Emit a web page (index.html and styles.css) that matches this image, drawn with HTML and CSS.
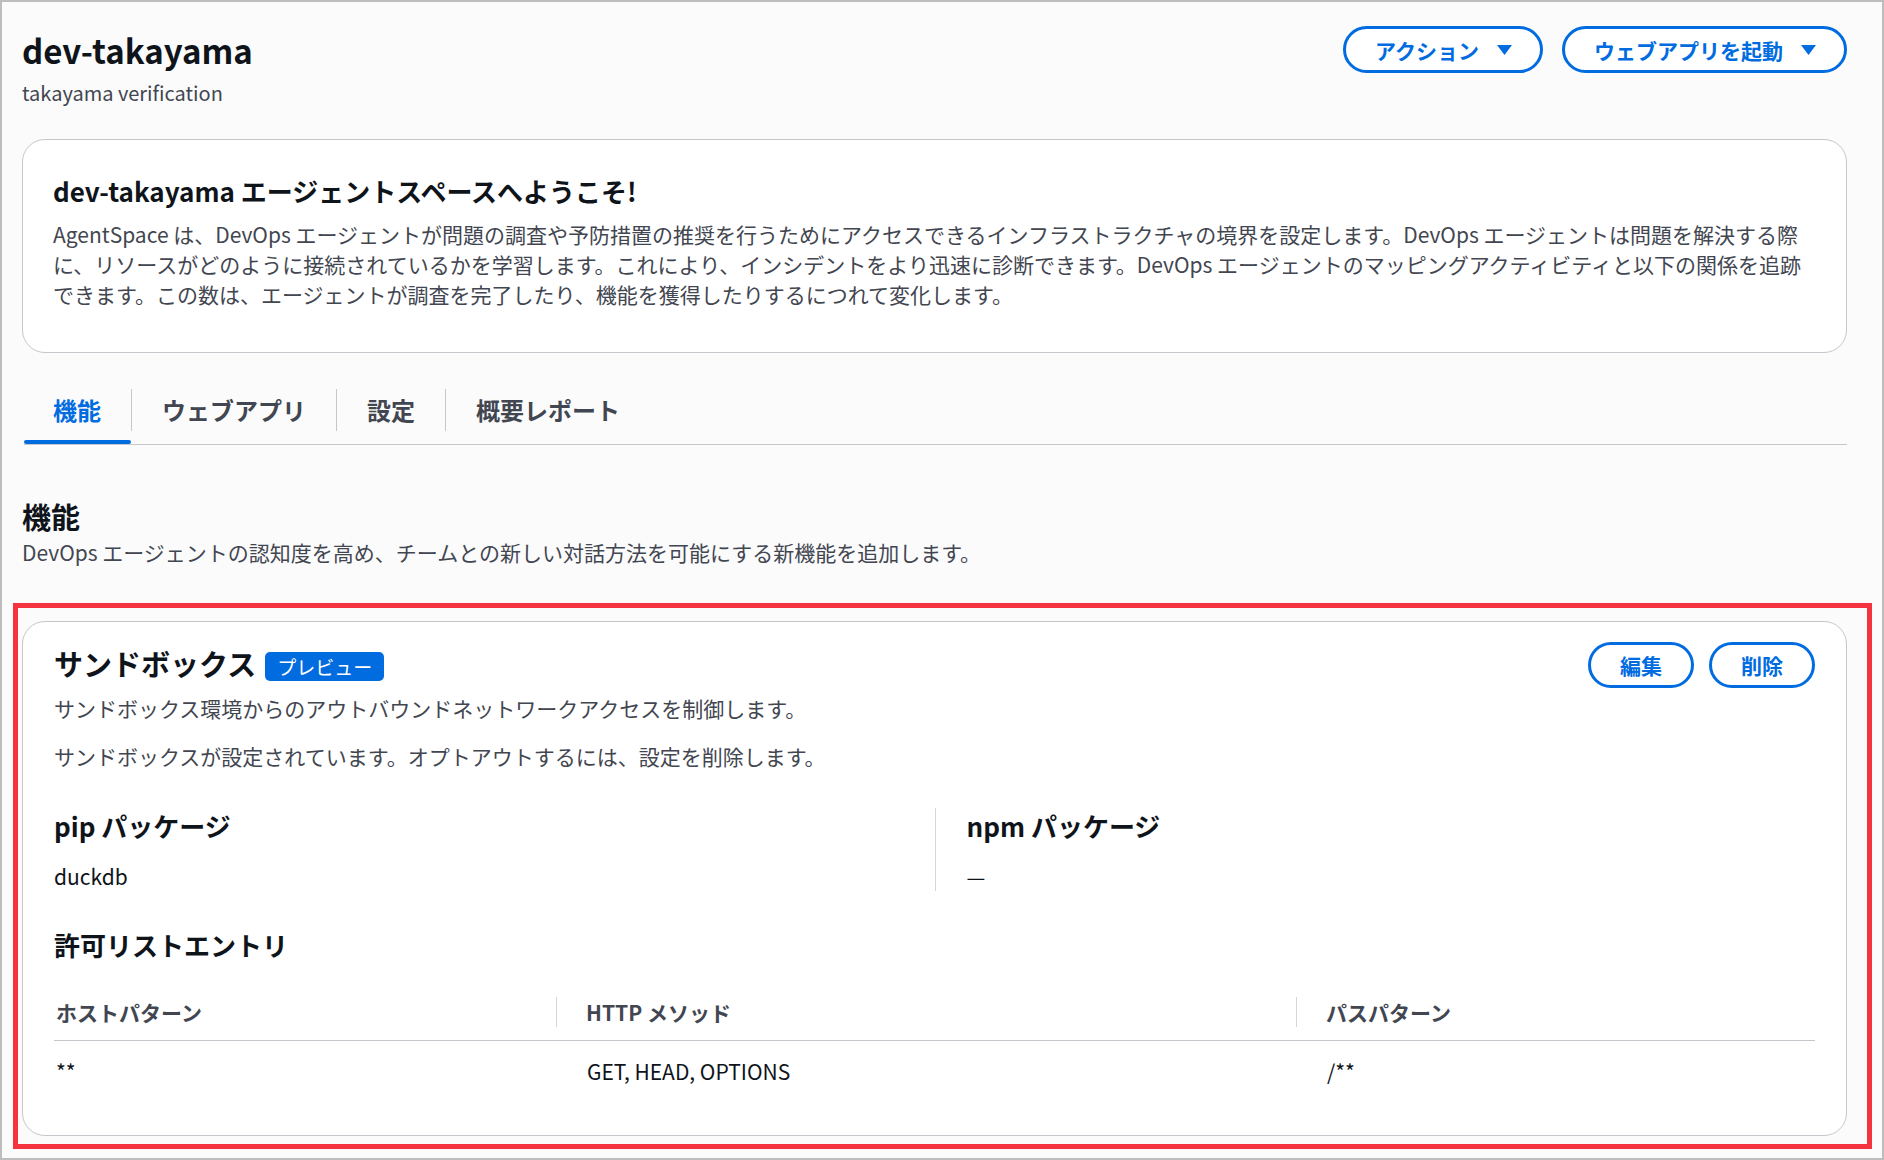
FILE: index.html
```html
<!DOCTYPE html>
<html lang="ja">
<head>
  <meta charset="UTF-8">
  <meta name="viewport" content="width=device-width, initial-scale=1.0">
  <title>dev-takayama</title>
  <link rel="stylesheet" href="styles.css">
</head>
<body>
  <div class="frame">
    <header class="page-header">
      <div>
        <h1 class="page-title">dev-takayama</h1>
        <p class="page-subtitle">takayama verification</p>
      </div>
      <div class="actions">
        <button class="btn">
          アクション
          <svg class="caret" width="15" height="12" viewBox="0 0 15 12"><polygon points="0,1 15,1 7.5,11" /></svg>
        </button>
        <button class="btn">
          ウェブアプリを起動
          <svg class="caret" width="15" height="12" viewBox="0 0 15 12"><polygon points="0,1 15,1 7.5,11" /></svg>
        </button>
      </div>
    </header>

    <section class="card welcome">
      <h2 class="welcome-title">dev-takayama エージェントスペースへようこそ!</h2>
      <p class="welcome-text">
        AgentSpace は、DevOps エージェントが問題の調査や予防措置の推奨を行うためにアクセスできるインフラストラクチャの境界を設定します。DevOps エージェントは問題を解決する際に、リソースがどのように接続されているかを学習します。これにより、インシデントをより迅速に診断できます。DevOps エージェントのマッピングアクティビティと以下の関係を追跡できます。この数は、エージェントが調査を完了したり、機能を獲得したりするにつれて変化します。
      </p>
    </section>

    <nav class="tabs">
      <a class="tab active">機能</a>
      <a class="tab">ウェブアプリ</a>
      <a class="tab">設定</a>
      <a class="tab">概要レポート</a>
    </nav>

    <div class="section-head">
      <h2 class="section-title">機能</h2>
      <p class="section-desc">DevOps エージェントの認知度を高め、チームとの新しい対話方法を可能にする新機能を追加します。</p>
    </div>

    <div class="highlight">
      <section class="card sandbox">
        <div class="sandbox-head">
          <div class="sandbox-title">
            <h2 class="card-title">サンドボックス</h2>
            <span class="badge">プレビュー</span>
          </div>
          <div class="actions small">
            <button class="btn">編集</button>
            <button class="btn">削除</button>
          </div>
        </div>
        <p class="muted">サンドボックス環境からのアウトバウンドネットワークアクセスを制御します。</p>
        <p class="muted second">サンドボックスが設定されています。オプトアウトするには、設定を削除します。</p>

        <div class="packages">
          <div class="pkg">
            <h3 class="sub-title">pip パッケージ</h3>
            <div class="pkg-value">duckdb</div>
          </div>
          <div class="pkg">
            <h3 class="sub-title">npm パッケージ</h3>
            <div class="pkg-value">—</div>
          </div>
        </div>

        <h3 class="sub-title allow">許可リストエントリ</h3>
        <table class="entries">
          <colgroup>
            <col class="c1"><col class="c2"><col class="c3">
          </colgroup>
          <thead>
            <tr>
              <th>ホストパターン</th>
              <th><span class="th-sep">HTTP メソッド</span></th>
              <th><span class="th-sep">パスパターン</span></th>
            </tr>
          </thead>
          <tbody>
            <tr>
              <td>**</td>
              <td>GET, HEAD, OPTIONS</td>
              <td>/**</td>
            </tr>
          </tbody>
        </table>
      </section>
    </div>
  </div>
</body>
</html>
```

FILE: styles.css
```css
html, body {
  margin: 0;
  padding: 0;
  background-color: #fff;
  color: #0f141a;
  font-family: "Noto Sans CJK JP", "Noto Sans", sans-serif;
}

.frame {
  box-sizing: border-box;
  height: 1160px;
  border: 2px solid #bdbdbd;
  background-color: #fbfbfc;
  padding: 27px 35px 0 20px;
  overflow: hidden;
}

h1, h2, h3, p {
  margin: 0;
}

/* header */

.page-header {
  display: flex;
  justify-content: space-between;
  align-items: flex-start;
}

.page-title {
  font-size: 33px;
  line-height: 42px;
  font-weight: 700;
}

.page-subtitle {
  font-size: 20px;
  line-height: 30px;
  color: #424650;
  margin-top: 7px;
}

.actions {
  display: flex;
  gap: 19px;
  margin-top: -3px;
}

.btn {
  display: flex;
  align-items: center;
  gap: 18px;
  height: 47px;
  padding: 0 28px 0 29px;
  border: 3px solid #006ce0;
  border-radius: 24px;
  background-color: #fff;
  color: #006ce0;
  font-family: inherit;
  font-size: 21px;
  font-weight: 700;
  cursor: pointer;
}

.caret {
  fill: #006ce0;
}

/* cards */

.card {
  background-color: #fff;
  border: 1px solid #c6c6cd;
  border-radius: 23px;
}

.welcome {
  margin-top: 31px;
  padding: 33px 32px 43px 30px;
}

.welcome-title {
  font-size: 26px;
  line-height: 36px;
  font-weight: 700;
}

.welcome-text {
  margin-top: 10px;
  font-size: 21px;
  line-height: 30px;
  color: #424650;
}

/* tabs */

.tabs {
  display: flex;
  margin: 36px 0 0 2px;
  padding-bottom: 13px;
  border-bottom: 1px solid #c6c6cd;
}

.tab {
  position: relative;
  padding: 0 30px;
  font-size: 24px;
  line-height: 42px;
  font-weight: 700;
  color: #424650;
  border-left: 1px solid #c6c6cd;
}

.tab:first-child {
  border-left: none;
  padding-left: 29px;
}

.tab.active {
  color: #006ce0;
}

.tab.active::after {
  content: "";
  position: absolute;
  left: 0;
  right: 0;
  bottom: -13px;
  height: 4px;
  border-radius: 2px;
  background-color: #006ce0;
}

/* section */

.section-head {
  margin-top: 52px;
}

.section-title {
  font-size: 29px;
  line-height: 38px;
  font-weight: 700;
}

.section-desc {
  font-size: 21px;
  line-height: 30px;
  color: #424650;
  margin-top: 2px;
}

/* annotation */

.highlight {
  position: relative;
  margin-top: 54px;
}

.highlight::before {
  content: "";
  position: absolute;
  top: -18px;
  left: -9px;
  right: -25px;
  bottom: -13px;
  border: 5px solid #f5333f;
  pointer-events: none;
}

/* sandbox card */

.sandbox {
  padding: 20px 31px 49px;
}

.sandbox-head {
  display: flex;
  justify-content: space-between;
  align-items: flex-start;
}

.sandbox-title {
  display: flex;
  align-items: center;
  gap: 9px;
  padding-top: 1px;
}

.card-title {
  font-size: 29px;
  line-height: 40px;
  font-weight: 700;
}

.badge {
  display: inline-block;
  height: 29px;
  line-height: 29px;
  margin-top: 6px;
  padding: 0 12px;
  border-radius: 5px;
  background-color: #006ce0;
  color: #fff;
  font-size: 19px;
}

.actions.small {
  gap: 15px;
  margin-top: 0;
}

.actions.small .btn {
  padding: 0 29px;
  height: 46px;
}

.muted {
  font-size: 21px;
  line-height: 30px;
  color: #424650;
  margin-top: 5px;
}

.muted.second {
  margin-top: 18px;
}

.packages {
  display: grid;
  grid-template-columns: 1fr 1fr;
  margin-top: 37px;
}

.pkg + .pkg {
  border-left: 1px solid #d5d5db;
  padding-left: 31px;
}

.sub-title {
  font-size: 26px;
  line-height: 36px;
  font-weight: 700;
}

.pkg-value {
  font-size: 21px;
  line-height: 30px;
  margin-top: 17px;
}

.allow {
  margin-top: 36px;
}

.entries {
  width: 100%;
  margin-top: 34px;
  border-collapse: collapse;
  font-size: 21px;
}

.c1 { width: 502px; }
.c2 { width: 740px; }

.entries th {
  text-align: left;
  font-weight: 700;
  color: #424650;
  padding: 0 0 13px 2px;
  line-height: 30px;
  border-bottom: 1.5px solid #c6c6cd;
}

.th-sep {
  display: block;
  border-left: 1px solid #d5d5db;
  padding-left: 29px;
  margin-left: -2px;
}

.entries td {
  padding: 15px 0 0 31px;
  line-height: 30px;
}

.entries td:first-child {
  padding-left: 2px;
}
```
